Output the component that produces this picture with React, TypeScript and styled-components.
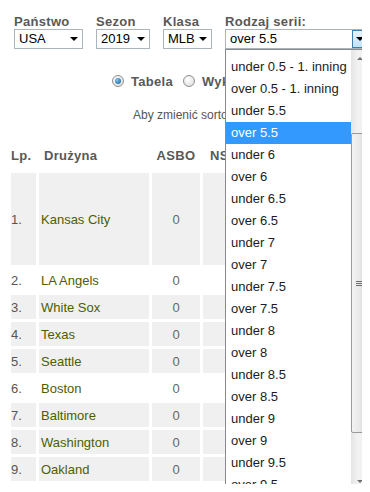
import styled, { createGlobalStyle } from 'styled-components';

interface TeamRow {
    lp: number;
    team: string;
    shaded: boolean;
    height?: number;
}

const filters = [
    { label: 'Państwo', value: 'USA', width: 69 },
    { label: 'Sezon', value: '2019', width: 54 },
    { label: 'Klasa', value: 'MLB', width: 49 },
];

const seriesOptions = [
    'under 0.5 - 1. inning',
    'over 0.5 - 1. inning',
    'under 5.5',
    'over 5.5',
    'under 6',
    'over 6',
    'under 6.5',
    'over 6.5',
    'under 7',
    'over 7',
    'under 7.5',
    'over 7.5',
    'under 8',
    'over 8',
    'under 8.5',
    'over 8.5',
    'under 9',
    'over 9',
    'under 9.5',
    'over 9.5',
];

const rows: TeamRow[] = [
    { lp: 1, team: 'Kansas City', shaded: true, height: 92 },
    { lp: 2, team: 'LA Angels', shaded: false },
    { lp: 3, team: 'White Sox', shaded: true },
    { lp: 4, team: 'Texas', shaded: true },
    { lp: 5, team: 'Seattle', shaded: true },
    { lp: 6, team: 'Boston', shaded: false },
    { lp: 7, team: 'Baltimore', shaded: true },
    { lp: 8, team: 'Washington', shaded: true },
    { lp: 9, team: 'Oakland', shaded: true },
];

function App() {
    const selected = 'over 5.5';

    return (
        <>
            <GlobalStyle />
            <FilterBar>
                {filters.map((f) => (
                    <Field key={f.label}>
                        <Label>{f.label}</Label>
                        <SelectBox $width={f.width}>
                            <SelectValue>{f.value}</SelectValue>
                            <ArrowButton>
                                <Caret />
                            </ArrowButton>
                        </SelectBox>
                    </Field>
                ))}
                <Field>
                    <Label>Rodzaj serii:</Label>
                    <SelectBox $width={144}>
                        <SelectValue>{selected}</SelectValue>
                        <ArrowButton $hover>
                            <Caret />
                        </ArrowButton>
                    </SelectBox>
                    <Dropdown>
                        <OptionList>
                            {seriesOptions.map((o) => (
                                <Option key={o} $selected={o === selected}>{o}</Option>
                            ))}
                        </OptionList>
                        <Scrollbar>
                            <ScrollArrow />
                            <Track>
                                <Thumb>
                                    <Grip />
                                    <Grip />
                                    <Grip />
                                </Thumb>
                            </Track>
                            <ScrollArrow $down />
                        </Scrollbar>
                    </Dropdown>
                </Field>
            </FilterBar>

            <ViewSwitch>
                <RadioOption>
                    <Radio $checked />
                    Tabela
                </RadioOption>
                <RadioOption>
                    <Radio />
                    Wykres
                </RadioOption>
            </ViewSwitch>

            <Hint>Aby zmienić sortowanie, kliknij nagłówek.</Hint>

            <Table>
                <thead>
                    <tr>
                        <HeadCell $width={25} $align="left">Lp.</HeadCell>
                        <HeadCell $width={105} $align="left" $pad={5}>Drużyna</HeadCell>
                        <HeadCell $width={48}>ASBO</HeadCell>
                        <HeadCell $width={56} $align="left" $pad={7}>NSBO</HeadCell>
                        <HeadCell $width={44}>M</HeadCell>
                        <HeadCell $width={40}>%</HeadCell>
                    </tr>
                </thead>
                <tbody>
                    {rows.map((r) => (
                        <tr key={r.lp}>
                            <Cell $shaded={r.shaded} $height={r.height}>{r.lp}.</Cell>
                            <TeamCell $shaded={r.shaded} $height={r.height}>{r.team}</TeamCell>
                            <NumCell $shaded={r.shaded} $height={r.height}>0</NumCell>
                            <NumCell $shaded={r.shaded} $height={r.height} $align="right">0</NumCell>
                            <NumCell $shaded={r.shaded} $height={r.height}>0</NumCell>
                            <NumCell $shaded={r.shaded} $height={r.height}>0</NumCell>
                        </tr>
                    ))}
                </tbody>
            </Table>
        </>
    );
}

const GlobalStyle = createGlobalStyle`
    html, body {
        overflow: hidden;
    }

    body {
        margin: 8px;
        background: #fff;
        font-family: "Liberation Sans", Arial, sans-serif;
    }
`;

const FilterBar = styled.div`
    display: flex;
    gap: 13px;
    padding: 6px 0 0 6px;
`;

const Field = styled.div`
    position: relative;
    display: flex;
    flex-direction: column;
`;

const Label = styled.label`
    font-size: 13px;
    line-height: 15px;
    font-weight: bold;
    color: #595959;
    letter-spacing: 0.3px;
    white-space: nowrap;
`;

const SelectBox = styled.div<{ $width: number }>`
    width: ${({ $width }) => $width}px;
    height: 20px;
    box-sizing: border-box;
    border: 1px solid #abb3bb;
    background: #fff;
    display: flex;
    align-items: stretch;
    font-size: 13px;
    color: #000;
`;

const SelectValue = styled.span`
    flex: 1;
    padding-left: 4px;
    line-height: 18px;
    white-space: nowrap;
`;

const ArrowButton = styled.span<{ $hover?: boolean }>`
    width: 16px;
    box-sizing: border-box;
    display: flex;
    align-items: center;
    justify-content: center;
    border: 1px solid ${({ $hover }) => $hover ? '#3c7fb1' : 'transparent'};
    background: ${({ $hover }) => $hover ? 'linear-gradient(#e5f3fc, #c4e2f7)' : 'transparent'};
`;

const Caret = styled.span`
    width: 0;
    height: 0;
    border-left: 4px solid transparent;
    border-right: 4px solid transparent;
    border-top: 4px solid #000;
`;

const Dropdown = styled.div`
    position: absolute;
    top: 100%;
    left: 0;
    width: 144px;
    height: 442px;
    box-sizing: border-box;
    border: 1px solid #8a8a8a;
    background: #fff;
    display: flex;
    z-index: 10;
`;

const OptionList = styled.div`
    flex: 1;
    overflow: hidden;
    padding-top: 6px;
`;

const Option = styled.div<{ $selected?: boolean }>`
    height: 22px;
    line-height: 22px;
    padding-left: 5px;
    font-size: 13px;
    white-space: nowrap;
    color: ${({ $selected }) => $selected ? '#fff' : '#1b1b24'};
    background: ${({ $selected }) => $selected ? '#3399ff' : 'transparent'};
`;

const Scrollbar = styled.div`
    width: 17px;
    display: flex;
    flex-direction: column;
    background: linear-gradient(to right, #e4e4e4, #f2f2f2 40%, #f0f0f0);
`;

const ScrollArrow = styled.div<{ $down?: boolean }>`
    height: 17px;
    display: flex;
    align-items: center;
    justify-content: center;

    &::after {
        content: '';
        border-left: 3px solid transparent;
        border-right: 3px solid transparent;
        ${({ $down }) => $down ? 'border-top: 3px solid #6f6f6f;' : 'border-bottom: 3px solid #6f6f6f;'}
    }
`;

const Track = styled.div`
    flex: 1;
    display: flex;
    flex-direction: column;
`;

const Thumb = styled.div`
    margin-top: 66px;
    height: 300px;
    box-sizing: border-box;
    border: 1px solid #9a9a9a;
    border-radius: 2px;
    background: linear-gradient(to right, #f3f3f3, #e8e8e8 50%, #d4d4d4);
    display: flex;
    flex-direction: column;
    align-items: center;
    justify-content: center;
    gap: 1px;
`;

const Grip = styled.span`
    width: 7px;
    height: 1px;
    background: #6e6e6e;
`;

const ViewSwitch = styled.div`
    display: flex;
    align-items: center;
    gap: 10px;
    height: 18px;
    margin-top: 23px;
    padding-left: 104px;
    font-size: 13px;
    font-weight: bold;
    color: #595959;
    letter-spacing: 0.3px;
`;

const RadioOption = styled.label`
    display: flex;
    align-items: center;
    gap: 7px;
`;

const Radio = styled.span<{ $checked?: boolean }>`
    width: 12px;
    height: 12px;
    box-sizing: border-box;
    border-radius: 50%;
    border: 1px solid #8f8f8f;
    background: radial-gradient(circle at 40% 35%, #fff, #d9d9d9);
    display: flex;
    align-items: center;
    justify-content: center;

    &::after {
        content: '';
        display: ${({ $checked }) => $checked ? 'block' : 'none'};
        width: 6px;
        height: 6px;
        border-radius: 50%;
        background: radial-gradient(circle at 35% 35%, #7cc3f0, #14598f);
    }
`;

const Hint = styled.div`
    margin-top: 18px;
    padding-left: 125px;
    font-size: 12px;
    line-height: 14px;
    color: #555;
    white-space: nowrap;
`;

const Table = styled.table`
    margin-top: 16px;
    border-spacing: 3px;
    border-collapse: separate;
    table-layout: fixed;
    font-size: 13px;
`;

const HeadCell = styled.th<{ $width: number; $align?: string; $pad?: number }>`
    width: ${({ $width }) => $width}px;
    height: 29px;
    padding: 0 0 0 ${({ $pad }) => $pad || 0}px;
    text-align: ${({ $align }) => $align || 'center'};
    font-weight: bold;
    color: #595959;
    letter-spacing: 0.3px;
    white-space: nowrap;
`;

const Cell = styled.td<{ $shaded: boolean; $height?: number }>`
    height: ${({ $height }) => $height || 24}px;
    padding: 0;
    background: ${({ $shaded }) => $shaded ? '#f0f0f0' : '#fff'};
    color: #555;
    white-space: nowrap;
`;

const TeamCell = styled(Cell)`
    padding-left: 2px;
    color: #4d5e00;
`;

const NumCell = styled(Cell)<{ $align?: string }>`
    text-align: ${({ $align }) => $align || 'center'};
    padding-right: ${({ $align }) => $align === 'right' ? '12px' : '0'};
    color: #666;
`;

export default App;
